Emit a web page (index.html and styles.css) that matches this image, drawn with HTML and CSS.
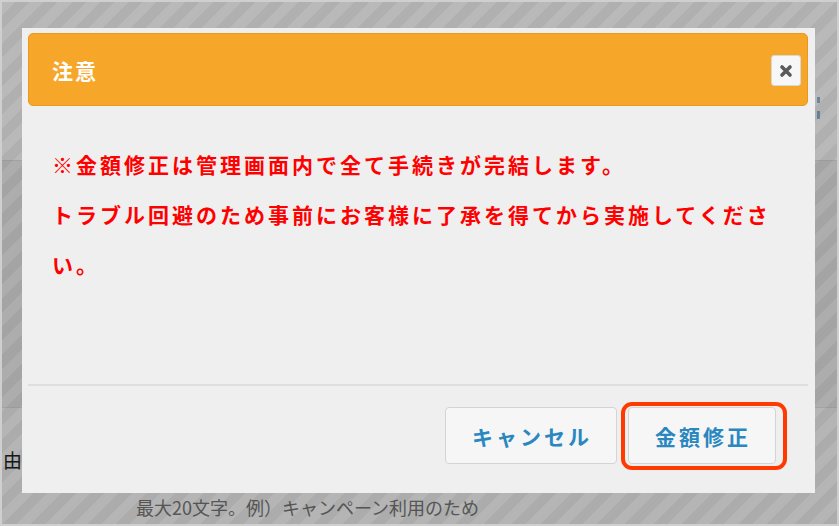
FILE: index.html
```html
<!DOCTYPE html>
<html lang="ja">
<head>
    <meta charset="UTF-8">
    <meta name="viewport" content="width=device-width, initial-scale=1.0">
    <title>注意</title>
    <link rel="stylesheet" href="styles.css">
</head>
<body>
    <div class="frame">
        <!-- page behind the dialog -->
        <div class="page">
            <div class="band band-top"></div>
            <div class="band band-mid"></div>
            <div class="band band-bottom">
                <span class="label">由<span class="req">*</span></span>
                <span class="hint">最大20文字。例）キャンペーン利用のため</span>
            </div>
            <div class="marks"></div>
        </div>
        <div class="overlay"></div>

        <div class="modal">
            <div class="modal-header">
                <span class="modal-title">注意</span>
                <button class="close">
                    <svg width="14" height="14" viewBox="0 0 14 14">
                        <path d="M3 3 L11 11 M11 3 L3 11" stroke="#5a5a5a" stroke-width="3.6" stroke-linecap="round"/>
                    </svg>
                </button>
            </div>
            <div class="modal-body">
                <p class="warning">※金額修正は管理画面内で全て手続きが完結します。<br>トラブル回避のため事前にお客様に了承を得てから実施してください。</p>
            </div>
            <div class="modal-footer">
                <button class="btn">キャンセル</button>
                <div class="highlight-wrap">
                    <button class="btn">金額修正</button>
                    <span class="highlight"></span>
                </div>
            </div>
        </div>
    </div>
</body>
</html>
```

FILE: styles.css
```css
html, body {
    margin: 0;
    padding: 0;
}
body {
    font-family: "Noto Sans CJK JP", "Liberation Sans", sans-serif;
    background-color: #cfcfcf;
}

.frame {
    position: relative;
    width: 835px;
    height: 522px;
    margin: 2px;
    overflow: hidden;
}

/* Page behind the overlay */
.page {
    display: flex;
    flex-direction: column;
    height: 100%;
}
.band { position: relative; }
.band-top {
    height: 158px;
    background-color: #fafafa;
    border-bottom: 1px solid #dcdcdc;
}
.band-mid {
    height: 246px;
    background-color: #eaeaea;
    border-bottom: 1px solid #dcdcdc;
}
.band-bottom {
    flex: 1;
    background-color: #f4f4f4;
}
.label {
    position: absolute;
    left: 1px;
    top: 40px;
    font-size: 19px;
    line-height: 24px;
    color: #222;
}
.req { color: #d00; font-size: 11px; vertical-align: top; }
.hint {
    position: absolute;
    left: 134px;
    top: 88px;
    font-size: 18px;
    line-height: 22px;
    color: #777;
}
.marks {
    position: absolute;
    left: 815px;
    top: 95px;
    width: 3px;
    height: 22px;
    background: linear-gradient(#8fb5d8 0 6px, transparent 6px 14px, #8fb5d8 14px);
}

.overlay {
    position: absolute;
    inset: 0;
    background-color: rgba(0, 0, 0, 0.26);
    background-image: repeating-linear-gradient(-45deg,
        rgba(0, 0, 0, 0.05) 0 10px,
        rgba(255, 255, 255, 0) 10px 20px);
}

/* Dialog */
.modal {
    position: absolute;
    left: 20px;
    top: 26px;
    width: 793px;
    height: 465px;
    background-color: #efefef;
    display: flex;
    flex-direction: column;
    padding: 5px 7px 0 6px;
    box-sizing: border-box;
}
.modal-header {
    height: 73px;
    background-color: #f6a628;
    border: 1px solid #e99a1e;
    border-radius: 5px;
    box-sizing: border-box;
    display: flex;
    align-items: center;
    justify-content: space-between;
    padding: 0 6px 0 23px;
}
.modal-title {
    color: #fff;
    font-size: 21px;
    font-weight: bold;
    letter-spacing: 2px;
}
.close {
    width: 30px;
    height: 31px;
    margin-top: 2px;
    background-color: #f7f7f7;
    border: 1px solid #d8d8d8;
    border-radius: 3px;
    display: flex;
    align-items: center;
    justify-content: center;
    padding: 0;
}

.modal-body {
    flex: 1;
    padding: 33px 20px 0 24px;
    border-bottom: 2px solid #dedede;
}
.warning {
    margin: 0;
    width: 730px;
    color: #ff0000;
    font-size: 21px;
    font-weight: bold;
    line-height: 50px;
    letter-spacing: 3px;
}

.modal-footer {
    height: 107px;
    display: flex;
    justify-content: flex-end;
    align-items: flex-start;
    gap: 11px;
    padding: 21px 32px 0 0;
    box-sizing: border-box;
}
.btn {
    height: 57px;
    padding: 0 24px 0 26px;
    background-color: #f6f6f6;
    border: 1px solid #d4d4d4;
    border-radius: 4px;
    color: #2a87bf;
    font-family: "Noto Sans CJK JP", sans-serif;
    font-size: 21px;
    font-weight: bold;
    letter-spacing: 3px;
}
.highlight-wrap {
    position: relative;
}
.highlight {
    position: absolute;
    left: -7px;
    right: -11px;
    top: -5px;
    bottom: -6px;
    border: 4px solid #ff3a00;
    border-radius: 11px;
    pointer-events: none;
}
```
